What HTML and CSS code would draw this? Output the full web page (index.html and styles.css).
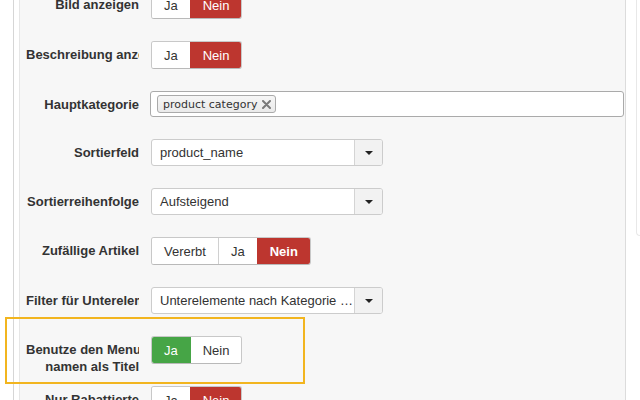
FILE: index.html
```html
<!DOCTYPE html>
<html lang="de">
<head>
<meta charset="utf-8">
<title>Menüeintrag bearbeiten</title>
<link rel="stylesheet" href="styles.css">
</head>
<body>
<div class="page">
  <div class="rail"></div>
  <div class="panel">
    <form class="form">
      <div class="field">
        <label class="field-label">Bild anzeigen</label>
        <div class="toggle">
          <span class="seg">Ja</span>
          <span class="seg seg-no">Nein</span>
        </div>
      </div>

      <div class="field">
        <label class="field-label">Beschreibung anzeigen</label>
        <div class="toggle">
          <span class="seg">Ja</span>
          <span class="seg seg-no">Nein</span>
        </div>
      </div>

      <div class="field">
        <label class="field-label">Hauptkategorie</label>
        <div class="tags-input">
          <span class="tag">product category
            <svg class="tag-x" width="9" height="9" viewBox="0 0 9 9" aria-hidden="true">
              <path d="M1 1 L8 8 M8 1 L1 8" stroke="#7a7a7a" stroke-width="2" stroke-linecap="round"/>
            </svg>
          </span>
        </div>
      </div>

      <div class="field">
        <label class="field-label">Sortierfeld</label>
        <div class="select">
          <span class="select-value">product_name</span>
          <span class="select-arrow"><span class="caret"></span></span>
        </div>
      </div>

      <div class="field">
        <label class="field-label">Sortierreihenfolge</label>
        <div class="select">
          <span class="select-value">Aufsteigend</span>
          <span class="select-arrow"><span class="caret"></span></span>
        </div>
      </div>

      <div class="field">
        <label class="field-label">Zufällige Artikel</label>
        <div class="toggle">
          <span class="seg">Vererbt</span>
          <span class="seg">Ja</span>
          <span class="seg seg-no seg-bold">Nein</span>
        </div>
      </div>

      <div class="field">
        <label class="field-label">Filter für Unterelemente</label>
        <div class="select">
          <span class="select-value">Unterelemente nach Kategorie …</span>
          <span class="select-arrow"><span class="caret"></span></span>
        </div>
      </div>

      <div class="field">
        <label class="field-label">Benutze den Menu-<br>namen als Titel</label>
        <div class="toggle">
          <span class="seg seg-yes">Ja</span>
          <span class="seg">Nein</span>
        </div>
      </div>

      <div class="field">
        <label class="field-label">Nur Rabattierte</label>
        <div class="toggle">
          <span class="seg">Ja</span>
          <span class="seg seg-no">Nein</span>
        </div>
      </div>
    </form>
  </div>
  <div class="aside"><div class="aside-box"></div></div>
  <div class="highlight"></div>
</div>
</body>
</html>
```

FILE: styles.css
```css
html, body {
  margin: 0;
  padding: 0;
  background: #fff;
}

body {
  font-family: "Liberation Sans", Arial, sans-serif;
  font-size: 13px;
  color: #333;
}

.page {
  position: relative;
  display: flex;
  width: 640px;
  height: 400px;
  overflow: hidden;
}

/* thin outer frame line on the left */
.rail {
  flex: none;
  width: 13px;
  border-right: 1px solid #d6d6d6;
  margin-right: 5px;
}

.panel {
  flex: none;
  box-sizing: content-box;
  width: 598px;
  background: #f7f7f7;
  border-left: 1px solid #e6e6e6;
  border-right: 1px solid #dcdcdc;
  padding-left: 6px;
  padding-right: 1px;
}

.aside {
  flex: 1;
  padding-left: 10px;
}

.aside-box {
  height: 235px;
  border-left: 1px solid #e8e8e8;
  border-bottom: 1px solid #e8e8e8;
  border-bottom-left-radius: 5px;
}

.form {
  margin-top: -9px;
}

.field {
  display: flex;
  align-items: flex-start;
  margin-bottom: 22px;
}

.field-label {
  flex: none;
  width: 113px;
  margin-right: 12px;
  margin-bottom: -40px;
  padding-top: 5px;
  line-height: 17px;
  font-weight: bold;
  color: #333;
  text-align: right;
  white-space: nowrap;
  overflow: hidden;
}

/* segmented yes/no radio group */
.toggle {
  display: flex;
  height: 28px;
  box-sizing: border-box;
  border: 1px solid #c8c8c8;
  border-bottom-color: #b9b9b9;
  border-radius: 3px;
  overflow: hidden;
  background: #fff;
}

.seg {
  display: flex;
  align-items: center;
  padding: 0 12px;
  color: #333;
  background: #fff;
}

.seg + .seg {
  border-left: 1px solid #d0d0d0;
}

.seg-no {
  background: #bd362f;
  color: #fff;
}

.seg + .seg-no {
  border-left-color: #bd362f;
}

.seg-yes {
  background: #46a546;
  color: #fff;
}

.seg-yes + .seg {
  border-left-color: #46a546;
}

.seg-bold {
  font-weight: bold;
}

/* tag-style multi select */
.tags-input {
  flex: 1;
  height: 26px;
  box-sizing: border-box;
  margin-left: -1px;
  border: 1px solid #aaa;
  border-radius: 3px;
  background: #fff;
  padding: 3px 0 0 6px;
}

.tag {
  display: inline-flex;
  align-items: center;
  height: 18px;
  box-sizing: border-box;
  padding: 0 4px 0 5px;
  border: 1px solid #aaa;
  border-radius: 3px;
  background: linear-gradient(#f6f6f6, #eaeaea);
  font-family: "DejaVu Sans", Verdana, sans-serif;
  font-size: 11px;
  color: #333;
}

.tag-x {
  display: block;
  margin-left: 5px;
}

/* dropdown select */
.select {
  display: flex;
  width: 232px;
  height: 27px;
  box-sizing: border-box;
  border: 1px solid #ccc;
  border-radius: 3px;
  background: #fff;
  overflow: hidden;
}

.select-value {
  flex: 1;
  min-width: 0;
  display: flex;
  align-items: center;
  padding: 0 8px;
  color: #333;
  white-space: nowrap;
  overflow: hidden;
}

.select-arrow {
  flex: none;
  width: 27px;
  display: flex;
  align-items: center;
  justify-content: center;
  border-left: 1px solid #d4d4d4;
  background: #f2f2f2;
}

.caret {
  width: 0;
  height: 0;
  border-top: 4px solid #222;
  border-left: 4px solid transparent;
  border-right: 4px solid transparent;
  margin-top: 1px;
}

.highlight {
  position: absolute;
  left: 5px;
  top: 317px;
  width: 300px;
  height: 67px;
  box-sizing: border-box;
  border: 2px solid #f2b51f;
}
```
